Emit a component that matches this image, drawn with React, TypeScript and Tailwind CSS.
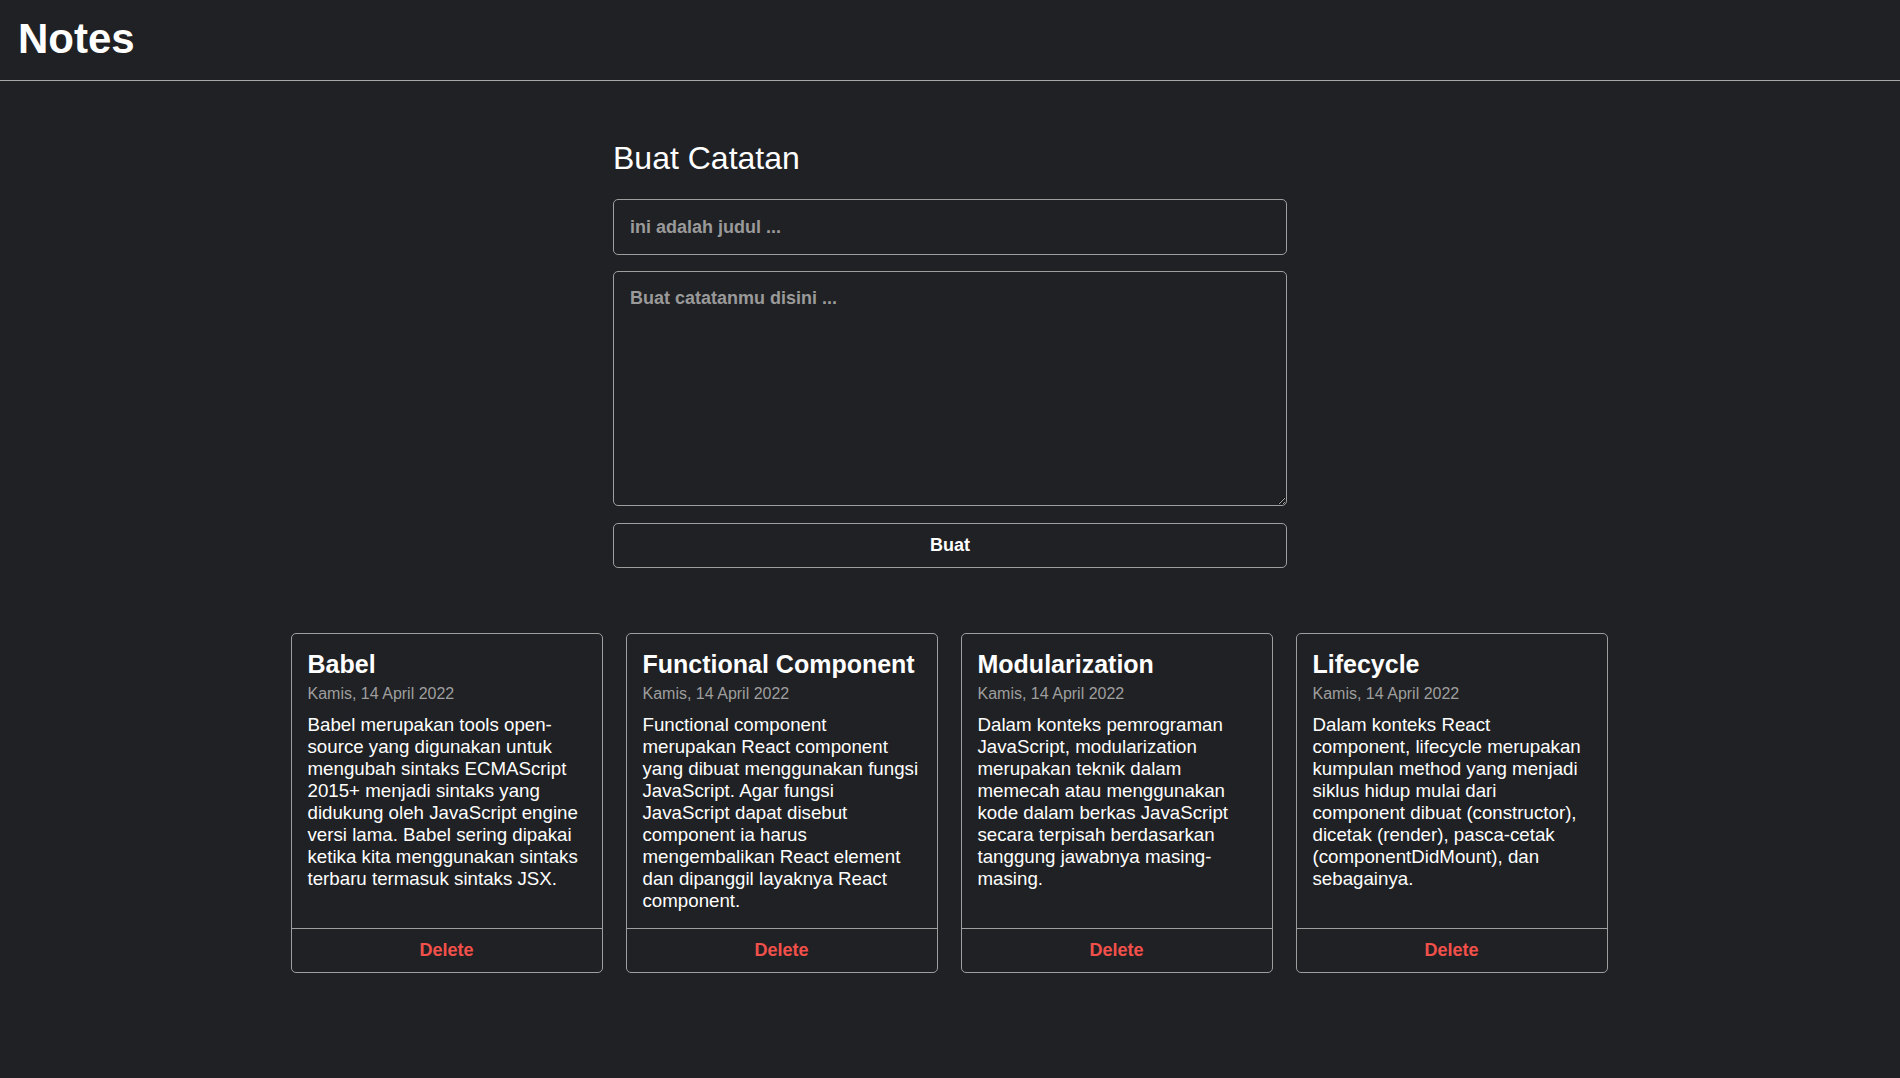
import React from "react";

const notes = [
  {
    title: "Babel",
    date: "Kamis, 14 April 2022",
    body: "Babel merupakan tools open-source yang digunakan untuk mengubah sintaks ECMAScript 2015+ menjadi sintaks yang didukung oleh JavaScript engine versi lama. Babel sering dipakai ketika kita menggunakan sintaks terbaru termasuk sintaks JSX.",
  },
  {
    title: "Functional Component",
    date: "Kamis, 14 April 2022",
    body: "Functional component merupakan React component yang dibuat menggunakan fungsi JavaScript. Agar fungsi JavaScript dapat disebut component ia harus mengembalikan React element dan dipanggil layaknya React component.",
  },
  {
    title: "Modularization",
    date: "Kamis, 14 April 2022",
    body: "Dalam konteks pemrograman JavaScript, modularization merupakan teknik dalam memecah atau menggunakan kode dalam berkas JavaScript secara terpisah berdasarkan tanggung jawabnya masing-masing.",
  },
  {
    title: "Lifecycle",
    date: "Kamis, 14 April 2022",
    body: "Dalam konteks React component, lifecycle merupakan kumpulan method yang menjadi siklus hidup mulai dari component dibuat (constructor), dicetak (render), pasca-cetak (componentDidMount), dan sebagainya.",
  },
];

export default function App() {
  return (
    <div
      className="min-h-screen w-full bg-[#202124] text-white"
      style={{ fontFamily: '"Liberation Sans", Arial, sans-serif' }}
    >
      <header className="h-[81px] border-b border-[#a9a9a9] pl-[18px] pt-[15px]">
        <h1 className="text-[42px] font-bold leading-[48px] m-0">Notes</h1>
      </header>

      <main className="flex flex-col items-center">
        <section className="w-[674px] pt-[59px]">
          <h2 className="text-[32px] font-normal leading-[37px]">Buat Catatan</h2>
          <form className="flex flex-col mt-[22px]" onSubmit={(e) => e.preventDefault()}>
            <input
              type="text"
              placeholder="ini adalah judul ..."
              className="h-[56px] w-full rounded-[5px] border border-[#9e9e9e] bg-transparent px-[16px] text-[18px] font-bold text-white placeholder:text-[#9a9a9a] outline-none"
            />
            <textarea
              placeholder="Buat catatanmu disini ..."
              className="mt-[16px] h-[235px] w-full rounded-[5px] border border-[#9e9e9e] bg-transparent px-[16px] pt-[13px] text-[18px] font-bold text-white placeholder:text-[#9a9a9a] outline-none"
            />
            <button
              type="submit"
              className="mt-[17px] h-[45px] w-full rounded-[5px] border border-[#9e9e9e] bg-transparent text-[18px] font-bold text-white"
            >
              Buat
            </button>
          </form>
        </section>

        <section className="mt-[65px] grid grid-cols-[repeat(4,312px)] gap-[23px] justify-center pb-[40px] -translate-x-[1px]">
          {notes.map((n) => (
            <article
              key={n.title}
              className="flex flex-col rounded-[5px] border border-[#9e9e9e] bg-[#202124]"
            >
              <div className="flex-1 px-[16px] pt-[16px] pb-[16px]">
                <h3 className="text-[25px] font-bold leading-[29px] whitespace-nowrap">{n.title}</h3>
                <p className="mt-[6px] text-[16px] leading-[18px] text-[#9e9e9e]">{n.date}</p>
                <p className="mt-[11px] text-[18.72px] leading-[22px] text-white">{n.body}</p>
              </div>
              <button className="border-t border-[#9e9e9e] bg-transparent pt-[11px] pb-[11px] text-[18px] font-bold leading-[21px] text-[#f2504a]">
                Delete
              </button>
            </article>
          ))}
        </section>
      </main>
    </div>
  );
}
